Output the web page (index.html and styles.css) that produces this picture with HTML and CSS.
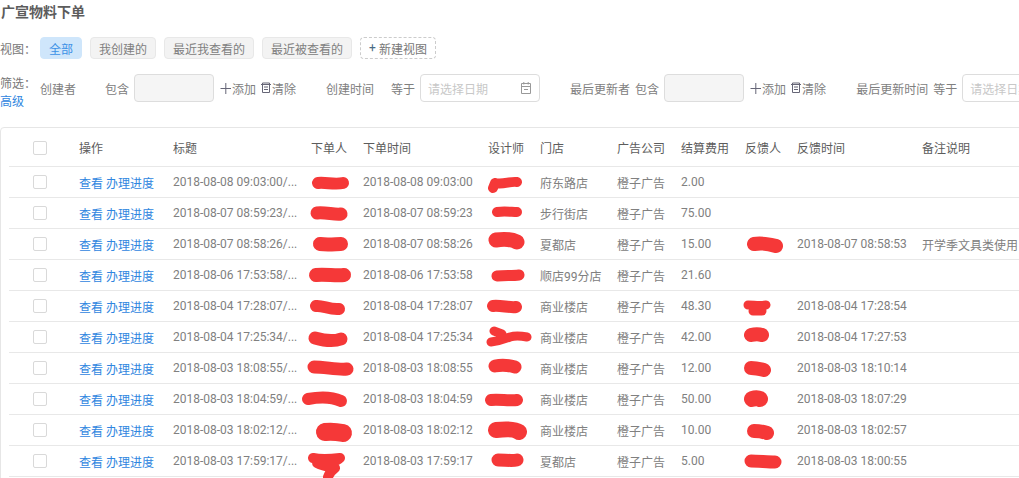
FILE: index.html
```html
<!DOCTYPE html>
<html lang="zh-CN">
<head>
<meta charset="utf-8">
<title>广宣物料下单</title>
<link rel="stylesheet" href="styles.css">
</head>
<body>
<div class="page">
  <h1 class="title">广宣物料下单</h1>
  <div class="views">
    <span class="views-label">视图：</span>
    <span class="chip active">全部</span>
    <span class="chip">我创建的</span>
    <span class="chip">最近我查看的</span>
    <span class="chip">最近被查看的</span>
    <span class="chip dashed"><span class="plus-small">+</span> 新建视图</span>
  </div>
  <div class="filters">
    <div class="filter-head"><span>筛选：</span><a class="link">高级</a></div>
    <div class="filter-item f1">
      <span class="w-name1">创建者</span><span>包含</span><span class="input"></span>
      <span class="action"><svg class="ico" viewBox="0 0 12 12"><path d="M0.5 6.5h10.500M5.800 1v11"/></svg>添加</span>
      <span class="action"><svg class="ico" viewBox="0 0 12 12"><path d="M1 2.500h10M2.500 2.500V1h7v1.500M2.500 2.500v8h7v-8M4 5h4M4 7.500h4"/></svg>清除</span>
    </div>
    <div class="filter-item f2">
      <span class="w-name2">创建时间</span><span>等于</span>
      <span class="date"><span>请选择日期</span><svg class="ico cal" viewBox="0 0 12 12"><path d="M1.500 1.500h9v10h-9zM1.500 4.500h9M3.800 0v2.500M8.200 0v2.500M4 7.500h4"/></svg></span>
    </div>
    <div class="filter-item f3">
      <span>最后更新者</span><span>包含</span><span class="input"></span>
      <span class="action"><svg class="ico" viewBox="0 0 12 12"><path d="M0.500 6.500h10.500M5.800 1v11"/></svg>添加</span>
      <span class="action"><svg class="ico" viewBox="0 0 12 12"><path d="M1 2.500h10M2.500 2.500V1h7v1.500M2.500 2.500v8h7v-8M4 5h4M4 7.500h4"/></svg>清除</span>
    </div>
    <div class="filter-item f4">
      <span>最后更新时间</span><span>等于</span>
      <span class="date"><span>请选择日期</span></span>
    </div>
  </div>
  <div class="card">
    <table class="grid">
      <colgroup>
        <col class="c0"><col class="c1"><col class="c2"><col class="c3"><col class="c4"><col class="c5"><col class="c6"><col class="c7"><col class="c8"><col class="c9"><col class="c10"><col class="c11">
      </colgroup>
      <thead>
        <tr><th><i class="check"></i></th><th>操作</th><th>标题</th><th>下单人</th><th>下单时间</th><th>设计师</th><th>门店</th><th>广告公司</th><th>结算费用</th><th>反馈人</th><th>反馈时间</th><th>备注说明</th></tr>
      </thead>
      <tbody>
        <tr><td><i class="check"></i></td><td><a class="link">查看 办理进度</a></td><td>2018-08-08 09:03:00/...</td><td></td><td>2018-08-08 09:03:00</td><td></td><td>府东路店</td><td>橙子广告</td><td>2.00</td><td></td><td></td><td></td></tr>
        <tr><td><i class="check"></i></td><td><a class="link">查看 办理进度</a></td><td>2018-08-07 08:59:23/...</td><td></td><td>2018-08-07 08:59:23</td><td></td><td>步行街店</td><td>橙子广告</td><td>75.00</td><td></td><td></td><td></td></tr>
        <tr><td><i class="check"></i></td><td><a class="link">查看 办理进度</a></td><td>2018-08-07 08:58:26/...</td><td></td><td>2018-08-07 08:58:26</td><td></td><td>夏都店</td><td>橙子广告</td><td>15.00</td><td></td><td>2018-08-07 08:58:53</td><td>开学季文具类使用</td></tr>
        <tr><td><i class="check"></i></td><td><a class="link">查看 办理进度</a></td><td>2018-08-06 17:53:58/...</td><td></td><td>2018-08-06 17:53:58</td><td></td><td>顺店99分店</td><td>橙子广告</td><td>21.60</td><td></td><td></td><td></td></tr>
        <tr><td><i class="check"></i></td><td><a class="link">查看 办理进度</a></td><td>2018-08-04 17:28:07/...</td><td></td><td>2018-08-04 17:28:07</td><td></td><td>商业楼店</td><td>橙子广告</td><td>48.30</td><td></td><td>2018-08-04 17:28:54</td><td></td></tr>
        <tr><td><i class="check"></i></td><td><a class="link">查看 办理进度</a></td><td>2018-08-04 17:25:34/...</td><td></td><td>2018-08-04 17:25:34</td><td></td><td>商业楼店</td><td>橙子广告</td><td>42.00</td><td></td><td>2018-08-04 17:27:53</td><td></td></tr>
        <tr><td><i class="check"></i></td><td><a class="link">查看 办理进度</a></td><td>2018-08-03 18:08:55/...</td><td></td><td>2018-08-03 18:08:55</td><td></td><td>商业楼店</td><td>橙子广告</td><td>12.00</td><td></td><td>2018-08-03 18:10:14</td><td></td></tr>
        <tr><td><i class="check"></i></td><td><a class="link">查看 办理进度</a></td><td>2018-08-03 18:04:59/...</td><td></td><td>2018-08-03 18:04:59</td><td></td><td>商业楼店</td><td>橙子广告</td><td>50.00</td><td></td><td>2018-08-03 18:07:29</td><td></td></tr>
        <tr><td><i class="check"></i></td><td><a class="link">查看 办理进度</a></td><td>2018-08-03 18:02:12/...</td><td></td><td>2018-08-03 18:02:12</td><td></td><td>商业楼店</td><td>橙子广告</td><td>10.00</td><td></td><td>2018-08-03 18:02:57</td><td></td></tr>
        <tr><td><i class="check"></i></td><td><a class="link">查看 办理进度</a></td><td>2018-08-03 17:59:17/...</td><td></td><td>2018-08-03 17:59:17</td><td></td><td>夏都店</td><td>橙子广告</td><td>5.00</td><td></td><td>2018-08-03 18:00:55</td><td></td></tr>
      </tbody>
    </table>
  </div>
  <svg class="scribble" viewBox="0 0 1019 478" aria-hidden="true">
    <path class="s12" d="M318 183C325 182 335 185 343 183"/>
    <path class="s13" d="M317 213C325 212 335 215 341 214"/>
    <path class="s14" d="M320 244C328 245 336 244 341 244"/>
    <path class="s14" d="M316 275C325 274 336 276 344 275"/>
    <path class="s12" d="M316 306C322 305 330 310 339 309"/>
    <path class="s13" d="M315 338C322 340 333 342 341 339"/>
    <path class="s13" d="M314 367C325 367 338 370 347 369"/>
    <path class="s12" d="M308 399C318 397 330 396 341 401"/>
    <path class="s18" d="M325 432C332 431 338 432 343 433"/>
    <path class="s10" d="M313 458C322 460 332 459 340 458M340 458C334 464 324 462 317 463C323 466 330 467 335 468C331 471 329 474 328 477"/>
    <path class="s10" d="M495 183C503 185 510 181 517 182M495 183L493 188"/>
    <path class="s10" d="M497 212C504 211 512 212 517 212"/>
    <path class="s15" d="M496 240C503 239 511 239 517 242"/>
    <path class="s11" d="M497 276C505 275 512 276 519 275"/>
    <path class="s12" d="M493 306C500 305 510 308 516 307"/>
    <path class="s9" d="M491 342C500 341 505 339 510 337C516 335 522 336 527 337M494 331L502 334"/>
    <path class="s13" d="M495 366C500 365 508 365 515 367"/>
    <path class="s12" d="M491 400C498 399 510 401 517 400"/>
    <path class="s16" d="M496 430C505 429 515 429 519 432"/>
    <path class="s13" d="M498 460C505 460 512 461 517 460"/>
    <path class="s14" d="M754 244C760 243 770 244 776 246"/>
    <path class="s9" d="M748 305C754 305 760 306 766 305"/>
    <path class="s9" d="M753 311L762 311"/>
    <path class="s14" d="M751 335C755 334 759 334 762 335"/>
    <path class="s14" d="M751 368C756 368 760 369 764 370"/>
    <path class="s16" d="M752 399C755 398 758 398 760 399"/>
    <path class="s14" d="M754 431C758 431 764 432 767 433"/>
    <path class="s13" d="M751 461C758 461 768 462 775 462"/>
  </svg>
</div>
</body>
</html>
```
FILE: styles.css
```css
* { box-sizing: border-box; }
html, body { margin: 0; padding: 0; background: #fff; }
body {
  width: 1019px;
  height: 478px;
  overflow: hidden;
  font-family: Roboto, "Noto Sans CJK SC", sans-serif;
  font-size: 12px;
  color: #666;
}
.page { position: relative; width: 1019px; height: 478px; overflow: hidden; }
.title {
  margin: 0;
  padding: 3px 0 0 1px;
  height: 37px;
  font-size: 14px;
  line-height: 18px;
  font-weight: 700;
  color: #5c5c5c;
}
.views { display: flex; align-items: center; gap: 8px; height: 22px; }
.views-label { width: 32px; white-space: nowrap; color: #777; }
.chip {
  display: flex;
  align-items: center;
  justify-content: center;
  height: 22px;
  padding: 0 8px;
  border: 1px solid #e8e8e8;
  border-radius: 4px;
  background: #f3f3f3;
  color: #808080;
  white-space: nowrap;
}
.chip.active { background: #cfe6fb; border-color: #cfe6fb; color: #3c91e6; }
.chip.dashed { background: #fff; border: 1px dashed #ccc; gap: 3px; color: #777; }
.plus-small { color: #4a6a85; }
.filters { display: flex; align-items: center; height: 28px; margin-top: 15px; width: 1100px; }
.filter-head { display: flex; flex-direction: column; width: 40px; line-height: 18px; margin-top: 10px; color: #777; }
.filter-item { display: flex; align-items: center; color: #808080; white-space: nowrap; }
.w-name1 { width: 65px; }
.w-name2 { width: 65px; }
.f2, .f3, .f4 { margin-left: 30px; }
.input {
  width: 80px;
  height: 28px;
  margin-left: 5px;
  background: #f5f5f5;
  border: 1px solid #ddd;
  border-radius: 4px;
}
.action { display: flex; align-items: center; margin-left: 6px; }
.action + .action { margin-left: 4px; }
.ico { width: 12px; height: 12px; fill: none; stroke: #667; stroke-width: 1; }
.date {
  display: flex;
  align-items: center;
  justify-content: space-between;
  width: 120px;
  height: 28px;
  margin-left: 5px;
  padding: 0 7px;
  border: 1px solid #ddd;
  border-radius: 4px;
  color: #c8c8c8;
}
.f3 > span:nth-child(2), .f4 > span:nth-child(2) { margin-left: 5px; }
.cal { stroke: #999; }
.link { color: #2f86e0; }
.card {
  margin-top: 25px;
  width: 1100px;
  height: 400px;
  padding-left: 8px;
  border: 1px solid #e6e6e6;
  border-radius: 4px;
}
.grid { table-layout: fixed; width: 1033px; border-collapse: collapse; }
.c0 { width: 70px; } .c1 { width: 94px; } .c2 { width: 138px; } .c3 { width: 52px; }
.c4 { width: 125px; } .c5 { width: 52px; } .c6 { width: 77px; } .c7 { width: 64px; }
.c8 { width: 64px; } .c9 { width: 52px; } .c10 { width: 125px; } .c11 { width: 120px; }
th, td {
  padding: 0;
  text-align: left;
  vertical-align: middle;
  white-space: nowrap;
  font-weight: 400;
  border-bottom: 1px solid #e8e8e8;
}
th { height: 38px; padding-top: 2px; color: #5c5c5c; }
td { height: 31px; padding-top: 1px; color: #808080; }
th:first-child, td:first-child { padding-left: 24px; }
.check {
  display: block;
  width: 14px;
  height: 14px;
  border: 1px solid #d9d9d9;
  border-radius: 2px;
  background: #fff;
}
.scribble { position: absolute; left: 0; top: 0; width: 1019px; height: 478px; pointer-events: none; }
.scribble path { fill: none; stroke: #f53838; stroke-linecap: round; stroke-linejoin: round; }
.s9 { stroke-width: 9; } .s10 { stroke-width: 10; } .s11 { stroke-width: 11; } .s12 { stroke-width: 12; }
.s13 { stroke-width: 13; } .s14 { stroke-width: 14; } .s15 { stroke-width: 15; } .s16 { stroke-width: 16; } .s18 { stroke-width: 18; }
```
